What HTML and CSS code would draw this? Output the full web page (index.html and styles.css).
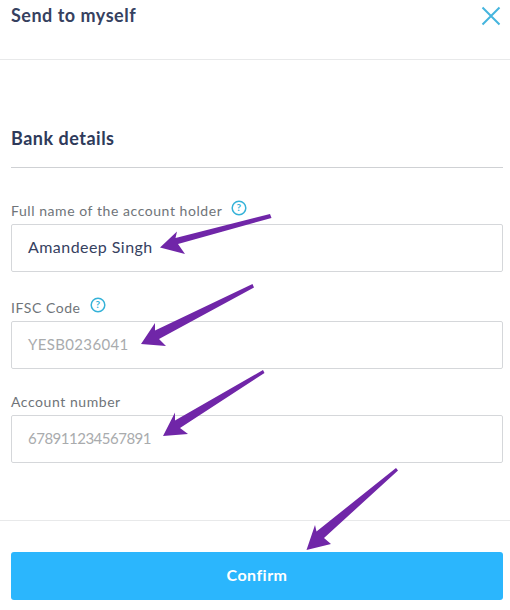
FILE: index.html
```html
<!DOCTYPE html>
<html lang="en">
<head>
    <meta charset="UTF-8">
    <title>Send to myself</title>
    <link rel="stylesheet" href="styles.css">
</head>
<body>
    <div class="page">
        <header class="top-bar">
            <h1>Send to myself</h1>
            <svg class="close-icon" width="20" height="20" viewBox="0 0 20 20">
                <path d="M1.5 1.5 L18.5 18.5 M18.5 1.5 L1.5 18.5"/>
            </svg>
        </header>
        <form class="details">
            <h2>Bank details</h2>
            <div class="field field-first">
                <label>Full name of the account holder
                    <svg class="help-icon" width="16" height="16" viewBox="0 0 16 16">
                        <circle cx="8" cy="8" r="6.8"/>
                        <text x="8" y="11.2">?</text>
                    </svg>
                </label>
                <div class="input filled">Amandeep Singh</div>
            </div>
            <div class="field">
                <label>IFSC Code
                    <svg class="help-icon" width="16" height="16" viewBox="0 0 16 16">
                        <circle cx="8" cy="8" r="6.8"/>
                        <text x="8" y="11.2">?</text>
                    </svg>
                </label>
                <div class="input code">YESB0236041</div>
            </div>
            <div class="field field-last">
                <label>Account number</label>
                <div class="input number">678911234567891</div>
            </div>
        </form>
        <footer class="bottom-bar">
            <button type="button">Confirm</button>
        </footer>

        <!-- annotation arrows drawn over the form -->
        <svg class="arrows" width="510" height="610" viewBox="0 0 510 610">
            <path d="M270 214 L271.500 218 L178 244 L185 254 L160 247.500 L177 231.500 L175.500 238 Z"/>
            <path d="M252.500 284 L254 287.500 L159 339 L166 346 L141 344 L155 323 L155 330.500 Z"/>
            <path d="M263 370 L264.500 373 L180 428 L188 434 L163 436 L175 412.500 L175 420.500 Z"/>
            <path d="M396 468 L398 470.500 L324 538 L331 544 L306.500 550 L315 525 L316.500 531.500 Z"/>
        </svg>
    </div>
</body>
</html>
```

FILE: styles.css
```css
body {
    margin: 0;
    background: #ffffff;
    font-family: 'Lato', sans-serif;
    color: #2e3a5a;
}
.page {
    position: relative;
    width: 510px;
    height: 610px;
    overflow: hidden;
}
.top-bar {
    display: flex;
    justify-content: space-between;
    align-items: flex-start;
    height: 54px;
    padding: 5px 9px 0 11px;
    border-bottom: 1px solid #e8e9ea;
}
h1 {
    margin: 0;
    font-size: 18px;
    line-height: 20px;
    font-weight: 700;
    letter-spacing: 0.5px;
    color: #36415f;
}
.close-icon {
    margin-top: 1px;
    fill: none;
    stroke: #45b5de;
    stroke-width: 2;
}
.details {
    height: 392px;
    padding: 68px 7px 0 11px;
}
h2 {
    margin: 0;
    padding-bottom: 19px;
    font-size: 18px;
    line-height: 20px;
    font-weight: 700;
    letter-spacing: 0.5px;
    color: #2e3a5a;
    border-bottom: 1px solid #cfd1d4;
}
.field {
    margin-top: 27px;
}
.field-first {
    margin-top: 34px;
}
.field-last {
    margin-top: 24px;
}
label {
    display: flex;
    align-items: center;
    gap: 9px;
    height: 16px;
    margin-bottom: 6px;
    font-size: 14px;
    letter-spacing: 0.56px;
    color: #6f7479;
}
.help-icon {
    margin-top: -4px;
    fill: none;
    stroke: #35b2d8;
    stroke-width: 1.5;
}
.help-icon text {
    fill: #35b2d8;
    stroke: none;
    font-size: 10px;
    font-weight: 700;
    text-anchor: middle;
}
.input {
    height: 46px;
    line-height: 44px;
    padding-left: 16px;
    border: 1px solid #d5d7da;
    border-radius: 2px;
    font-size: 16px;
    letter-spacing: 0.45px;
    color: #a9abad;
}
.filled {
    color: #36415f;
}
.code {
    font-size: 15px;
    letter-spacing: 0.35px;
}
.number {
    font-size: 15px;
    letter-spacing: -0.5px;
}
.bottom-bar {
    padding: 31px 7px 0 11px;
    border-top: 1px solid #e8e9ea;
}
button {
    display: block;
    width: 100%;
    height: 48px;
    padding: 0 0 4px;
    border: none;
    border-radius: 3px;
    background-color: #2bb6fd;
    color: #ffffff;
    font-family: inherit;
    font-size: 16px;
    font-weight: 700;
    letter-spacing: 0.45px;
}
.arrows {
    position: absolute;
    top: 0;
    left: 0;
    fill: #7026a8;
}
```
